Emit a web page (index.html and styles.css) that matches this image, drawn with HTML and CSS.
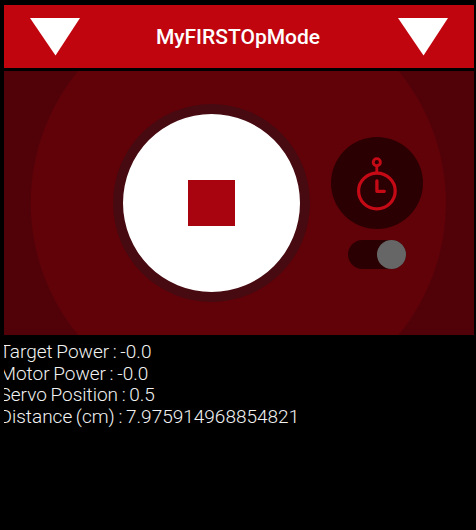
FILE: index.html
```html
<!DOCTYPE html>
<html lang="en">
<head>
<meta charset="utf-8">
<title>MyFIRSTOpMode</title>
<link rel="stylesheet" href="styles.css">
</head>
<body>
<main class="screen">
  <header class="opmode-bar">
    <button class="picker" aria-label="Autonomous"><svg width="50" height="38" viewBox="0 0 50 38"><path d="M0 0H50L25.5 37.5Z" fill="#fff"/></svg></button>
    <h1 class="title">MyFIRSTOpMode</h1>
    <button class="picker" aria-label="Teleop"><svg width="50" height="38" viewBox="0 0 50 38"><path d="M0 0H50L25.5 37.5Z" fill="#fff"/></svg></button>
  </header>
  <section class="controls">
    <button class="stop" aria-label="Stop"><span class="stop-mark"></span></button>
    <div class="timer">
      <div class="timer-disc">
        <svg width="92" height="92" viewBox="0 0 92 92" fill="none" stroke="#c50a16" stroke-width="3.2">
          <circle cx="45.8" cy="25.2" r="3.6" stroke-width="2.9"/>
          <path d="M45.8 29v6" stroke-width="2.8"/>
          <ellipse cx="45.9" cy="54" rx="18.3" ry="17.8"/>
          <path d="M45.9 43.8v10.5h7.4" stroke-width="3.3" stroke-linecap="round" stroke-linejoin="round"/>
        </svg>
      </div>
      <div class="toggle"><span class="knob"></span></div>
    </div>
  </section>
  <section class="telemetry">
    <p>Target Power : -0.0</p>
    <p>Motor Power : -0.0</p>
    <p>Servo Position : 0.5</p>
    <p>Distance (cm) : 7.975914968854821</p>
  </section>
</main>
</body>
</html>
```
FILE: styles.css
```css
* {
  box-sizing: border-box;
}

body {
  margin: 0;
  background: #000;
  font-family: Roboto, "Liberation Sans", sans-serif;
}

button {
  padding: 0;
  border: 0;
  background: none;
}

.screen {
  height: 530px;
  padding: 4.5px 2.5px 0 4px;
  overflow: hidden;
}

.opmode-bar {
  display: flex;
  align-items: flex-start;
  justify-content: space-between;
  height: 63.5px;
  padding: 13.5px 25.5px 0 26px;
  background: #c0050f;
}

.picker,
.picker svg {
  display: block;
}

.title {
  margin: 7px 2px 0 0;
  color: #fff;
  font-size: 21px;
  font-weight: 500;
  line-height: 24px;
}

.controls {
  display: flex;
  height: 264px;
  margin-top: 3px;
  padding: 33px 0 0 109px;
  background: radial-gradient(circle at 234.3px 132px, #610108 207px, #500208 208px);
}

.stop {
  display: grid;
  place-items: center;
  width: 197px;
  height: 198px;
  border: 10px solid #470a11;
  border-radius: 50%;
  background: #fff;
}

.stop-mark {
  width: 46.5px;
  height: 46.5px;
  background: #a7040f;
}

.timer {
  display: flex;
  flex-direction: column;
  align-items: center;
  gap: 11px;
  margin: 33px 0 0 21px;
}

.timer-disc {
  width: 92px;
  height: 92px;
  border-radius: 50%;
  background: #2b0003;
}

.timer-disc svg {
  display: block;
}

.toggle {
  display: flex;
  justify-content: flex-end;
  width: 58px;
  height: 29px;
  border-radius: 15px;
  background: #2b0003;
}

.knob {
  width: 29px;
  height: 29px;
  border-radius: 50%;
  background: #666;
}

.telemetry {
  height: 195px;
  padding-top: 6px;
  overflow: hidden;
  color: #f2f2f2;
  font-size: 19px;
  font-weight: 300;
  line-height: 21.7px;
  white-space: nowrap;
  word-spacing: -1px;
}

.telemetry p {
  margin: 0 0 0 -4.5px;
}
```
